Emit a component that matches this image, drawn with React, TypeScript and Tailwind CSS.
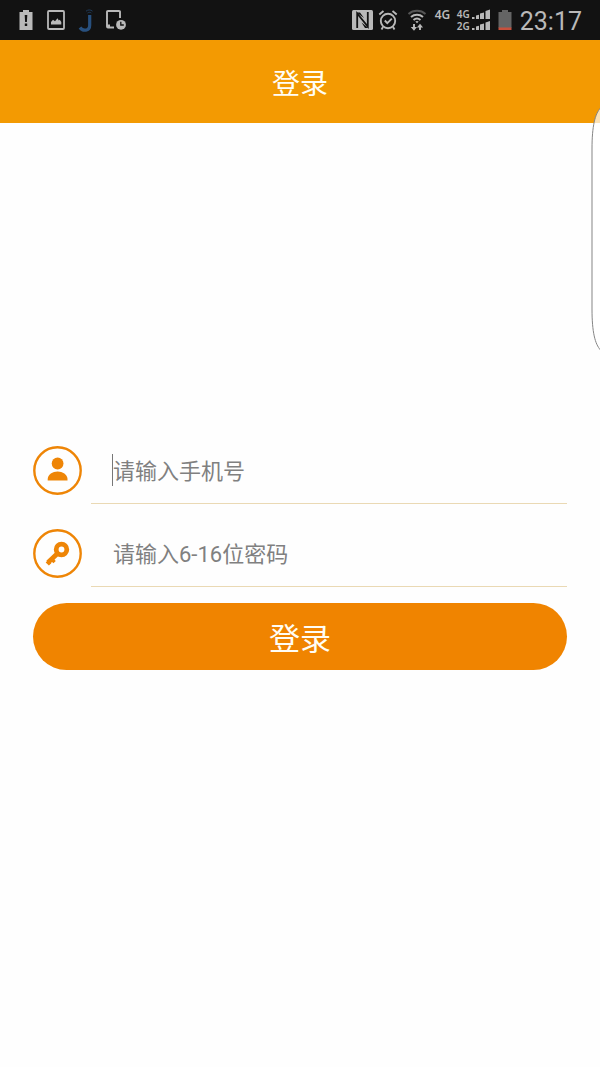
import type { ReactNode } from "react";

function NoticeIcons() {
  return (
    <div className="flex items-center text-[#b9b9b9]">
      <svg className="h-5 w-[14px]" viewBox="0 0 14 20" fill="currentColor" aria-hidden="true">
        <path d="M4 0h6v2h3.500v18H.5V2H4z" />
        <path d="M5.700 5h2.600l-.4 7H6.100zM5.800 13.500h2.400V16H5.800z" fill="#121212" />
      </svg>
      <svg className="ml-[14px] h-5 w-[18px]" viewBox="0 0 18 20" aria-hidden="true">
        <rect x="1" y="1" width="16" height="18" rx="1" fill="none" stroke="currentColor" strokeWidth="1.800" />
        <path d="M4 14.500v-2.500l2-2.300 2 1.600 2.500-3 1.300 2.200 1-.8 1.500 2.300v2.500z" fill="currentColor" />
      </svg>
      <svg className="ml-[13px] h-6 w-4" viewBox="0 0 16 24" fill="none" aria-hidden="true">
        <path d="M11.700 7v10.200c0 6-7 6.200-9.700 2.300" stroke="#28507e" strokeWidth="3.200" />
        <path d="M8 3.200c2-1.700 4.500-1.700 6.500 0M9.500 5c1.200-.9 2.600-.9 3.800 0" stroke="#1f3a59" strokeWidth="1" />
      </svg>
      <svg className="ml-3 h-5 w-5" viewBox="0 0 20 20" fill="none" aria-hidden="true">
        <path d="M14 8V2q0-1-1-1H2Q1 1 1 2v14.500q0 1 1 1h6M1 15.500h3" stroke="currentColor" strokeWidth="1.900" />
        <circle cx="15" cy="14.800" r="4.900" fill="currentColor" />
        <path d="M14.800 11.800v3.200h3" stroke="#121212" strokeWidth="1.300" />
      </svg>
    </div>
  );
}

function SystemIcons() {
  return (
    <div className="flex items-center text-[#b9b9b9]">
      <svg className="h-5 w-[21px]" viewBox="0 0 21 20" aria-hidden="true">
        <rect width="21" height="20" rx="1.500" fill="currentColor" />
        <path d="M5.200 18V3.500L15.800 16.500V2" fill="none" stroke="#121212" strokeWidth="1.800" />
        <path d="M4.500 2.500H8L12 8zM9.500 12.500l7 5.500H13z" fill="#121212" />
      </svg>
      <svg className="ml-[5px] h-[22px] w-5" viewBox="0 0 20 22" fill="none" stroke="currentColor" aria-hidden="true">
        <circle cx="10" cy="12" r="7.200" strokeWidth="1.900" />
        <path d="M6.800 11.500l2.500 2.700 4.500-4.500M1.300 5.500L5.500 2M14.500 2l4.200 3.500M5 18l-1.500 2.500M15 18l1.500 2.500" strokeWidth="1.900" />
      </svg>
      <svg className="ml-[9px] h-[22px] w-5" viewBox="0 0 20 22" fill="none" stroke="currentColor" aria-hidden="true">
        <path d="M1.500 5c4.700-4.200 12.300-4.200 17 0" stroke="#555" strokeWidth="2" />
        <path d="M4 8c3.500-3 8.500-3 12 0M6.500 11c2-1.700 5-1.700 7 0" strokeWidth="2" />
        <path d="M8.300 12.500q1.700-1.200 3.400 0L10 14.200z" fill="currentColor" stroke="none" />
        <path d="M7 15v5M13 21v-5" strokeWidth="1.900" />
        <path d="M3.700 18h6.300L7 21.700zM9.900 18.500L13 14.800l3.100 3.700z" fill="currentColor" stroke="none" />
      </svg>
      <span className="mb-[10px] ml-2 w-[17px] font-['Noto_Sans'] text-[12px] leading-3 font-semibold">4G</span>
      <span className="ml-[5px] flex w-[15px] flex-col font-['Noto_Sans'] text-[10px] leading-3 font-semibold">
        <span>4G</span>
        <span>2G</span>
      </span>
      <svg className="h-[22px] w-[19px]" viewBox="0 0 19 22" fill="currentColor" aria-hidden="true">
        <path d="M0 8h2.500v2H0zM4 6.500l3-.8V10H4zM8 4.500l4-1V10H8zM13.500 2L18 .5V10h-4.500z" />
        <path d="M0 19h2.500v2H0zM4 17.500l3-.8V21H4zM8 15.500l4-1V21H8zM13.500 13.500L18 12v9h-4.500z" />
      </svg>
      <svg className="ml-[7px] h-5 w-[14px]" viewBox="0 0 14 20" aria-hidden="true">
        <path d="M4 0h6v2h3.500v16H.5V2H4z" fill="#646464" />
        <path d="M.5 17.500h13V20H.5z" fill="#c8503c" />
      </svg>
      <time className="ml-2 pt-[3px] text-[25px] leading-8 text-[#b9b9b9]">23:17</time>
    </div>
  );
}

function UserIcon() {
  return (
    <svg className="h-[49px] w-[49px]" viewBox="0 0 49 49" aria-hidden="true">
      <circle cx="24.500" cy="24.500" r="23.200" fill="none" stroke="#ee8506" strokeWidth="2.400" />
      <circle cx="24.600" cy="17.500" r="5.900" fill="#ee8506" />
      <path d="M14.700 34.500v-1.500c0-4.500 5-7.500 9.900-7.500s9.900 3 9.900 7.500v1.500z" fill="#ee8506" />
    </svg>
  );
}

function KeyIcon() {
  return (
    <svg className="h-[49px] w-[49px]" viewBox="0 0 49 49" fill="none" stroke="#ee8506" aria-hidden="true">
      <circle cx="24.500" cy="24.500" r="23.200" strokeWidth="2.400" />
      <circle cx="28.500" cy="20.500" r="5.300" strokeWidth="4.800" />
      <path d="M25 24L15 33.500" strokeWidth="4.800" />
      <path d="M18 29.500l3.600 3.600M13.900 32.200l3.200 3.200" strokeWidth="3.400" />
    </svg>
  );
}

type FieldProps = {
  id: string;
  type: string;
  placeholder: string;
  icon: ReactNode;
  active?: boolean;
};

function Field({ id, type, placeholder, icon, active }: FieldProps) {
  return (
    <div className="flex h-[67px] items-center gap-[9px]">
      <label htmlFor={id} className="shrink-0">
        {icon}
      </label>
      <div className="relative h-full flex-1 border-b border-[#ead9b4]">
        <input
          id={id}
          type={type}
          placeholder={placeholder}
          aria-label={placeholder}
          className="h-full w-full bg-transparent pt-[2px] pl-[22px] text-[22px] text-[#808080] outline-none placeholder:text-[#808080]"
        />
        {active && <span className="absolute top-[17px] left-[21px] h-8 w-px bg-[#777]" />}
      </div>
    </div>
  );
}

export default function App() {
  return (
    <div className="relative min-h-screen overflow-hidden bg-[#fefefe] font-['Roboto','Noto_Sans_CJK_SC',sans-serif]">
      <div className="flex h-10 items-center justify-between bg-[#121212] pr-[18px] pl-[19px]">
        <NoticeIcons />
        <SystemIcons />
      </div>

      <header className="flex h-[83px] items-center justify-center bg-[#f39a02] pt-[6px]">
        <h1 className="text-[28px] leading-10 text-[#fffdf5]">登录</h1>
      </header>

      <form className="flex flex-col gap-4 px-[33px] pt-[314px]" onSubmit={(e) => e.preventDefault()}>
        <Field id="phone" type="tel" placeholder="请输入手机号" icon={<UserIcon />} active />
        <Field id="password" type="password" placeholder="请输入6-16位密码" icon={<KeyIcon />} />
        <button type="submit" className="h-[67px] w-full rounded-full bg-[#f08400] pt-2 text-[31px] text-[#fffdf5]">
          登录
        </button>
      </form>

      {/* edge panel handle */}
      <svg className="absolute top-[104px] right-0 h-[250px] w-[9px]" viewBox="0 0 9 250" aria-hidden="true">
        <path
          d="M9.500 4C4 10 1 22 1 45v160c0 23 3 35 8.500 41"
          fill="#fff"
          fillOpacity="0.700"
          stroke="#858585"
          strokeWidth="1"
        />
      </svg>
    </div>
  );
}
